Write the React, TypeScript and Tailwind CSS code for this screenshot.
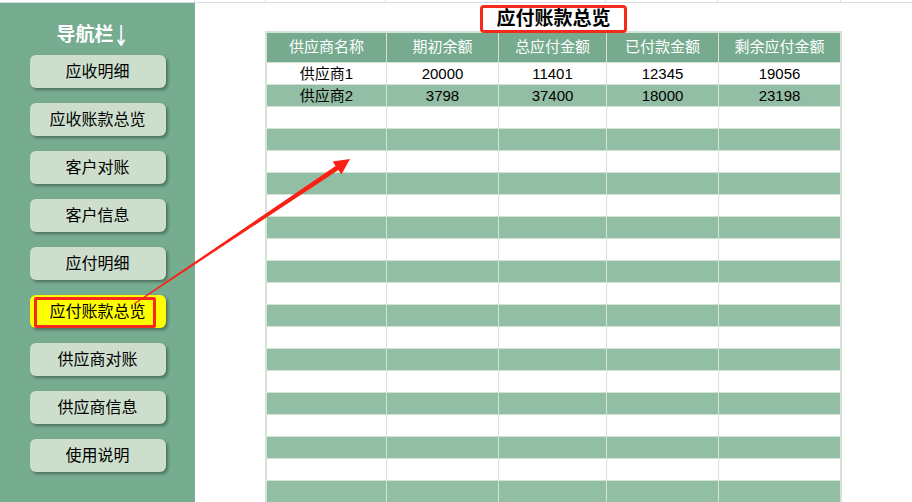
import React from 'react';

const navItems = ['应收明细', '应收账款总览', '客户对账', '客户信息', '应付明细', '应付账款总览', '供应商对账', '供应商信息', '使用说明'];
const activeNav = '应付账款总览';

const headers = ['供应商名称', '期初余额', '总应付金额', '已付款金额', '剩余应付金额'];
const rows: (string | number)[][] = [
  ['供应商1', 20000, 11401, 12345, 19056],
  ['供应商2', 3798, 37400, 18000, 23198],
];
const emptyRows = 18;

const cols = 'grid grid-cols-[119px_111px_107px_111px_121px] gap-x-px';

function NavButton({ label }: { label: string }) {
  const active = label === activeNav;
  return (
    <div
      className={`relative w-[136px] h-[33px] shrink-0 rounded-[6px] flex items-center justify-center text-[16px] text-black shadow-[2px_2px_3px_rgba(0,0,0,0.35)] ${
        active ? 'bg-[#ffff00]' : 'bg-[#cddfcc]'
      }`}
    >
      {active && <div className="absolute left-[4px] top-[2px] w-[122px] h-[31px] border-[3px] border-[#f52a1c] rounded-[2px]" />}
      <span className="relative">{label}</span>
    </div>
  );
}

export default function App() {
  return (
    <div
      className="relative w-[912px] h-[502px] overflow-hidden bg-white"
      style={{ fontFamily: '"Liberation Sans", "Noto Sans CJK SC", sans-serif' }}
    >
      {/* spreadsheet gridline strip */}
      <div className="flex h-[3px] border-b border-[#d8dee9]">
        <div className="w-[195px] border-r border-[#d8dee9]" />
        <div className="w-[71px] border-r border-[#d8dee9]" />
        <div className="w-[120px] border-r border-[#d8dee9]" />
        <div className="w-[112px] border-r border-[#d8dee9]" />
        <div className="w-[108px] border-r border-[#d8dee9]" />
        <div className="w-[112px] border-r border-[#d8dee9]" />
        <div className="w-[123px] border-r border-[#d8dee9]" />
      </div>

      <div className="flex h-[499px]">
        {/* sidebar */}
        <div className="w-[195px] shrink-0 bg-[#76ac8f] flex flex-col items-center">
          <div className="mt-[20px] h-[24px] pr-[10px] text-[19px] font-bold text-white leading-[24px] flex items-center">
            导航栏
            <span className="inline-block font-['DejaVu_Sans'] font-normal text-[18px] scale-y-[1.6] translate-y-[1px]">↓</span>
          </div>
          <div className="mt-[8px] flex flex-col gap-[15px]">
            {navItems.map((item) => (
              <NavButton key={item} label={item} />
            ))}
          </div>
        </div>

        {/* main */}
        <div className="pl-[70px] flex flex-col">
          <div className="relative z-10 w-[577px] h-[28px] flex justify-center">
            <div className="mt-[2px] h-[28px] w-[147px] border-[3px] border-[#f52a1c] rounded-[4px] flex items-center justify-center text-[19px] font-bold text-black bg-white">
              应付账款总览
            </div>
          </div>
          <div className="w-[577px] border-2 border-b-0 border-[#d3e4d5] bg-[#d3e4d5] flex flex-col gap-y-px">
            <div className={`${cols} h-[29px]`}>
              {headers.map((h) => (
                <div key={h} className="bg-[#76ab8f] text-white text-[15px] flex items-center justify-center">
                  {h}
                </div>
              ))}
            </div>
            {rows.map((r, i) => (
              <div key={i} className={`${cols} h-[21px]`}>
                {r.map((c, j) => (
                  <div
                    key={j}
                    className={`${i % 2 === 0 ? 'bg-white' : 'bg-[#92bea5]'} text-black text-[15px] leading-[21px] text-center`}
                  >
                    {c}
                  </div>
                ))}
              </div>
            ))}
            {Array.from({ length: emptyRows }).map((_, i) => (
              <div key={`e${i}`} className={`${cols} h-[21px]`}>
                {headers.map((h) => (
                  <div key={h} className={i % 2 === 0 ? 'bg-white' : 'bg-[#92bea5]'} />
                ))}
              </div>
            ))}
          </div>
        </div>
      </div>

      {/* annotation arrow */}
      <svg className="absolute inset-0 pointer-events-none z-20" width="912" height="502" viewBox="0 0 912 502">
        <polygon
          points="133.7,303.6 335.6,165.9 332.6,161.5 350,159 341.4,174.5 338.4,170.1 134.3,304.4"
          fill="#fb2014"
        />
      </svg>
    </div>
  );
}
